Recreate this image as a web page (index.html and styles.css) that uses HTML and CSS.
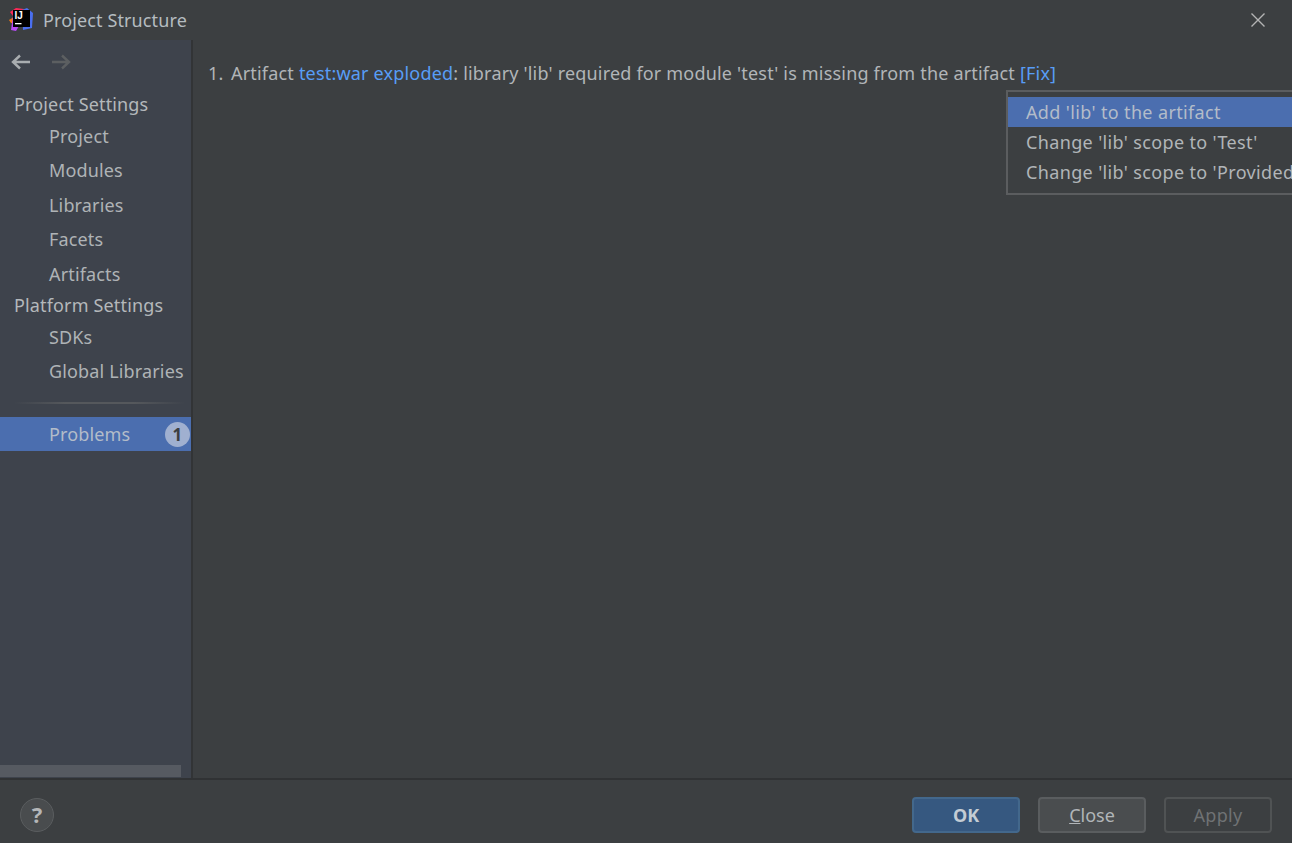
FILE: index.html
```html
<!DOCTYPE html>
<html lang="en">
<head>
  <meta charset="UTF-8" />
  <title>Project Structure</title>
  <link rel="stylesheet" href="styles.css">
</head>
<body>
  <div class="dialog">
    <!-- Title bar -->
    <header class="titlebar">
      <svg class="app-logo" width="24" height="24" viewBox="0 0 24 24">
        <path d="M0 12 L5 9 L6 16 L2 15 Z" fill="#f97a12"/>
        <path d="M2 22 L4 8 L10 18 L7 23 Z" fill="#b74af7"/>
        <path d="M1 4 L7 0 L15 1 L12 8 L4 8 Z" fill="#fe2857"/>
        <path d="M13 2 L18 0 L24 5 L23 20 L14 22 Z" fill="#4a6ff0"/>
        <rect x="4" y="2" width="17" height="17" fill="#000"/>
        <text class="logo-text" x="5.5" y="11">IJ</text>
        <rect x="6" y="15" width="6.5" height="1.3" fill="#fff"/>
      </svg>
      <span class="title">Project Structure</span>
      <svg class="close-x" width="16" height="16" viewBox="0 0 16 16">
        <path d="M1.5 1.5 L14.5 14.5 M14.5 1.5 L1.5 14.5" stroke="#b4b4b4" stroke-width="1.4" fill="none"/>
      </svg>
    </header>

    <div class="content">
      <!-- Sidebar -->
      <aside class="sidebar">
        <div class="nav-arrows">
          <svg width="22" height="18" viewBox="0 0 22 18">
            <path d="M20 9 H3 M10 2.5 L3 9 L10 15.5" stroke="#a9adb0" stroke-width="2.4" fill="none"/>
          </svg>
          <svg width="22" height="18" viewBox="0 0 22 18">
            <path d="M2 9 H19 M12 2.5 L19 9 L12 15.5" stroke="#5c5f61" stroke-width="2.4" fill="none"/>
          </svg>
        </div>
        <div class="group-title first">Project Settings</div>
        <div class="nav-item">Project</div>
        <div class="nav-item">Modules</div>
        <div class="nav-item">Libraries</div>
        <div class="nav-item">Facets</div>
        <div class="nav-item">Artifacts</div>
        <div class="group-title second">Platform Settings</div>
        <div class="nav-item">SDKs</div>
        <div class="nav-item">Global Libraries</div>
        <div class="nav-sep"></div>
        <div class="nav-item selected">Problems <span class="badge">1</span></div>
        <div class="h-scroll"></div>
      </aside>

      <!-- Problems list -->
      <main class="main">
        <p class="problem"><span class="num">1.</span>Artifact <a class="link">test:war exploded</a>: library 'lib' required for module 'test' is missing from the artifact <a class="link">[Fix]</a></p>
        <div class="popup">
          <div class="popup-item selected">Add 'lib' to the artifact</div>
          <div class="popup-item">Change 'lib' scope to 'Test'</div>
          <div class="popup-item">Change 'lib' scope to 'Provided'</div>
        </div>
      </main>
    </div>

    <!-- Footer -->
    <footer class="footer">
      <div class="help">?</div>
      <div class="buttons">
        <button class="btn btn-ok">OK</button>
        <button class="btn btn-close"><u>C</u>lose</button>
        <button class="btn btn-apply">Apply</button>
      </div>
    </footer>
  </div>
</body>
</html>
```

FILE: styles.css
```css
/* Global Styles */
html, body {
  margin: 0;
  padding: 0;
  height: 100%;
  overflow: hidden;
}
body {
  font-family: "Noto Sans", "Open Sans", sans-serif;
  font-size: 18px;
  background-color: #3c3f41;
  color: #bbbbbb;
}
.dialog {
  display: flex;
  flex-direction: column;
  height: 843px;
}
/* Title bar */
.titlebar {
  height: 40px;
  flex: none;
  display: flex;
  align-items: center;
  padding: 0 26px 0 9px;
}
.app-logo {
  margin-right: 10px;
}
.logo-text {
  font-family: "Liberation Sans", sans-serif;
  font-size: 10px;
  font-weight: bold;
  fill: #fff;
}
.title {
  flex: 1;
  color: #b5bcc0;
  letter-spacing: 0.12px;
}
/* Content area */
.content {
  flex: 1;
  display: flex;
  min-height: 0;
}
.sidebar {
  width: 191px;
  flex: none;
  display: flex;
  flex-direction: column;
  background-color: #3e434c;
  border-right: 2px solid #323436;
  letter-spacing: 0.15px;
}
.nav-arrows {
  height: 44px;
  display: flex;
  align-items: center;
  gap: 18px;
  padding-left: 10px;
}
.group-title {
  height: 30px;
  line-height: 30px;
  padding-left: 14px;
  color: #b4b8bb;
}
.group-title.first {
  margin-top: 5px;
}
.group-title.second {
  height: 29px;
  line-height: 29px;
}
.nav-item {
  height: 34.4px;
  line-height: 34.4px;
  padding-left: 49px;
  color: #afb3b6;
  position: relative;
}
.nav-sep {
  height: 2px;
  margin: 13px 6px 13px 14px;
  background: linear-gradient(90deg, #3e434c, #55585c 30%, #55585c 70%, #3e434c);
}
.nav-item.selected {
  background-color: #4b6eaf;
  color: #b3bcc9;
}
.badge {
  position: absolute;
  right: 1px;
  top: 5px;
  width: 25px;
  height: 25px;
  line-height: 25px;
  border-radius: 50%;
  background-color: #a0b0d0;
  color: #3c3f41;
  font-weight: bold;
  font-size: 17px;
  text-align: center;
}
.h-scroll {
  margin-top: auto;
  margin-bottom: 1px;
  width: 181px;
  height: 12px;
  background-color: #565a61;
}
.main {
  flex: 1;
  position: relative;
  padding: 21px 0 0 15px;
}
.problem {
  margin: 0;
  line-height: 24px;
  white-space: nowrap;
  color: #b1b5b8;
  letter-spacing: 0.19px;
}
.num {
  display: inline-block;
  width: 23px;
}
.link {
  color: #589df6;
}
/* Quick-fix popup */
.popup {
  position: absolute;
  left: 813px;
  right: -2px;
  top: 50px;
  padding: 5px 0 6px;
  border: 2px solid #5b5d5f;
  border-right: none;
  background-color: #3c3f41;
  white-space: nowrap;
  overflow: hidden;
  letter-spacing: 0.36px;
}
.popup-item {
  height: 30px;
  line-height: 30px;
  padding-left: 18px;
  color: #b1b5b8;
}
.popup-item.selected {
  background-color: #4b6eaf;
  color: #b3bcc9;
}
/* Footer */
.footer {
  height: 57px;
  flex: none;
  display: flex;
  align-items: center;
  justify-content: space-between;
  border-top: 2px solid #303234;
  padding: 6px 20px 0 20px;
}
.help {
  width: 32px;
  height: 32px;
  line-height: 31px;
  border: 1px solid #5a5d5f;
  border-radius: 50%;
  background-color: #494c4e;
  color: #b4b6b8;
  font-size: 22px;
  font-weight: bold;
  text-align: center;
}
.buttons {
  display: flex;
  gap: 18px;
}
.btn {
  width: 108px;
  height: 36px;
  padding: 0;
  border-radius: 4px;
  font-family: inherit;
  font-size: 18px;
  color: #b1b5b8;
  background-color: #4a4d4f;
  border: 2px solid #5a5d5f;
}
.btn-ok {
  background-color: #365880;
  border-color: #43688c;
  color: #c4ccd4;
  font-weight: bold;
}
.btn-apply {
  background-color: #3c3f41;
  border-color: #505354;
  color: #6f7274;
  letter-spacing: 0.3px;
}
```
